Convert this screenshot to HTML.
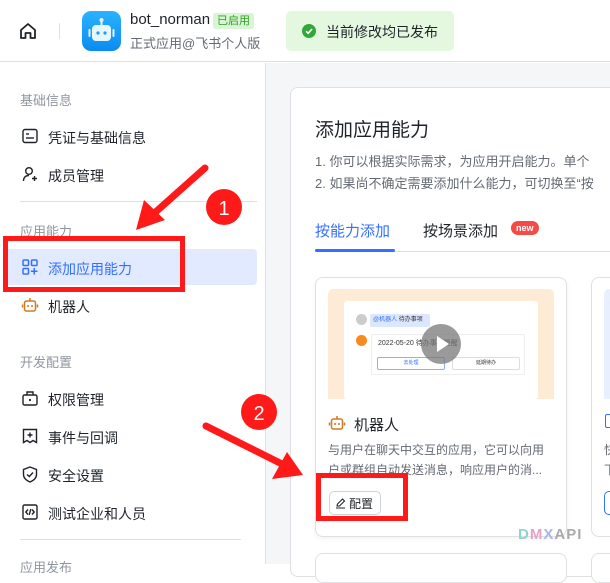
<!DOCTYPE html>
<html><head><meta charset="utf-8"><style>
*{box-sizing:border-box;margin:0;padding:0}
body{width:610px;height:564px;overflow:hidden;background:#fff;font-family:"Liberation Sans","Noto Sans CJK SC",sans-serif;color:#1f2329;position:relative}
.a{position:absolute}
.t{position:absolute;white-space:nowrap}
.side .t{font-size:14px}
.grp{color:#8f959e;font-size:13px!important}
</style></head><body>
<!-- header -->
<div class="a" style="left:0;top:0;width:610px;height:62px;border-bottom:1px solid #dee0e3;background:#fff"></div>
<svg class="a" style="left:18px;top:21px" width="20" height="20" viewBox="0 0 20 20"><path d="M3 9 L10 3 L17 9 V17 H12.5 V12 H7.5 V17 H3 Z" fill="none" stroke="#1f2329" stroke-width="1.8" stroke-linejoin="round"/></svg>
<div class="a" style="left:59px;top:23px;width:1px;height:16px;background:#dee0e3"></div>
<div class="a" style="left:82px;top:11px;width:39px;height:40px;border-radius:9px;background:linear-gradient(180deg,#2bb2ff,#0a8cf0)"></div>
<svg class="a" style="left:82px;top:11px" width="39" height="40" viewBox="0 0 39 40"><line x1="19.5" y1="9" x2="19.5" y2="14" stroke="#dff3ff" stroke-width="2"/><circle cx="19.5" cy="9" r="2" fill="#dff3ff"/><rect x="10" y="14" width="19" height="16" rx="4" fill="#e6f6ff"/><rect x="6.5" y="18" width="2" height="8" rx="1" fill="#e6f6ff"/><rect x="30.5" y="18" width="2" height="8" rx="1" fill="#e6f6ff"/><circle cx="16" cy="22" r="1.6" fill="#1a9bf5"/><circle cx="23" cy="22" r="1.6" fill="#1a9bf5"/></svg>
<div class="t" style="left:130px;top:11px;font-size:15px">bot_norman</div>
<div class="t" style="left:213px;top:13px;font-size:11px;background:#d9f5d6;color:#2ea121;padding:1px 4px;border-radius:3px;line-height:14px">已启用</div>
<div class="t" style="left:130px;top:33px;font-size:13px;color:#646a73">正式应用@飞书个人版</div>
<div class="a" style="left:286px;top:11px;width:168px;height:40px;background:#e4f8e0;border-radius:5px"></div>
<svg class="a" style="left:302px;top:24px" width="14" height="14" viewBox="0 0 14 14"><circle cx="7" cy="7" r="7" fill="#34a73b"/><path d="M4 7.2 L6.2 9.2 L10 5" fill="none" stroke="#fff" stroke-width="1.6"/></svg>
<div class="t" style="left:326px;top:22px;font-size:14px">当前修改均已发布</div>
<!-- sidebar -->
<div class="side">
<div class="a" style="left:265px;top:63px;width:345px;height:501px;background:#f5f6f7;border-left:1px solid #dee0e3"></div>
<div class="t grp" style="left:20px;top:90px">基础信息</div>
<svg class="a" style="left:22px;top:128px" width="16" height="16" viewBox="0 0 16 16"><rect x="1" y="1.5" width="14" height="13" rx="2" fill="none" stroke="#1f2329" stroke-width="1.4"/><line x1="4" y1="6" x2="7" y2="6" stroke="#1f2329" stroke-width="1.4"/><line x1="4" y1="10" x2="12" y2="10" stroke="#1f2329" stroke-width="1.4"/></svg>
<div class="t" style="left:48px;top:128px">凭证与基础信息</div>
<svg class="a" style="left:22px;top:166px" width="16" height="16" viewBox="0 0 16 16"><circle cx="7" cy="5" r="3.3" fill="none" stroke="#1f2329" stroke-width="1.4"/><path d="M1.5 15 C1.5 11 4 9.5 7 9.5" fill="none" stroke="#1f2329" stroke-width="1.4"/><path d="M10 12.5 H15 M12.5 10 V15" stroke="#1f2329" stroke-width="1.4"/></svg>
<div class="t" style="left:48px;top:166px">成员管理</div>
<div class="a" style="left:20px;top:201px;width:237px;height:1px;background:#dee0e3"></div>
<div class="t grp" style="left:20px;top:221px">应用能力</div>
<div class="a" style="left:5px;top:249px;width:252px;height:36px;background:#e1eaff;border-radius:4px"></div>
<svg class="a" style="left:22px;top:259px" width="16" height="16" viewBox="0 0 16 16"><g fill="none" stroke="#3370ff" stroke-width="1.5"><rect x="1" y="1" width="5.5" height="5.5" rx="1"/><rect x="9.5" y="1" width="5.5" height="5.5" rx="1"/><rect x="1" y="9.5" width="5.5" height="5.5" rx="1"/><path d="M12.25 9 V15.5 M9 12.25 H15.5"/></g></svg>
<div class="t" style="left:48px;top:259px;color:#3370ff">添加应用能力</div>
<svg class="a" style="left:21px;top:296px" width="18" height="18" viewBox="0 0 18 18"><g fill="none" stroke="#d07a20" stroke-width="1.5"><rect x="3.5" y="5" width="11" height="10" rx="2"/><path d="M9 2 V5 M1.5 8.5 V11.5 M16.5 8.5 V11.5"/></g><circle cx="7" cy="10" r="1" fill="#d07a20"/><circle cx="11" cy="10" r="1" fill="#d07a20"/></svg>
<div class="t" style="left:48px;top:297px">机器人</div>
<div class="t grp" style="left:20px;top:352px">开发配置</div>
<svg class="a" style="left:22px;top:390px" width="16" height="16" viewBox="0 0 16 16"><g fill="none" stroke="#1f2329" stroke-width="1.4"><rect x="1" y="5" width="14" height="10" rx="1.5"/><path d="M5 5 V2 H11 V5"/></g><circle cx="8" cy="10" r="1.1" fill="#1f2329"/></svg>
<div class="t" style="left:48px;top:390px">权限管理</div>
<svg class="a" style="left:22px;top:428px" width="16" height="16" viewBox="0 0 16 16"><g fill="none" stroke="#1f2329" stroke-width="1.4"><path d="M1.5 1.5 H14.5 V14.5 L11 12.5 L8 14.5 L5 12.5 L1.5 14.5 Z"/><path d="M8 4.5 V9.5 M5.5 7 H10.5"/></g></svg>
<div class="t" style="left:48px;top:428px">事件与回调</div>
<svg class="a" style="left:22px;top:466px" width="16" height="17" viewBox="0 0 16 17"><g fill="none" stroke="#1f2329" stroke-width="1.4"><path d="M8 1 L14.5 3.5 V8.5 C14.5 12 11.5 14.5 8 16 C4.5 14.5 1.5 12 1.5 8.5 V3.5 Z"/><path d="M5 8.5 L7.3 10.5 L11 6.5"/></g></svg>
<div class="t" style="left:48px;top:466px">安全设置</div>
<svg class="a" style="left:22px;top:504px" width="16" height="16" viewBox="0 0 16 16"><g fill="none" stroke="#1f2329" stroke-width="1.4"><rect x="1" y="1" width="14" height="14" rx="1.5"/><path d="M6 5.5 L3.8 8 L6 10.5 M10 5.5 L12.2 8 L10 10.5 M8.8 5 L7.2 11"/></g></svg>
<div class="t" style="left:48px;top:504px">测试企业和人员</div>
<div class="a" style="left:20px;top:539px;width:221px;height:1px;background:#dee0e3"></div>
<div class="t grp" style="left:20px;top:557px">应用发布</div>
</div>
<!-- main card -->
<div class="a" style="left:290px;top:87px;width:330px;height:490px;background:#fff;border:1px solid #dee0e3;border-radius:8px"></div>
<div class="t" style="left:315px;top:115px;font-size:19px">添加应用能力</div>
<div class="t" style="left:315px;top:151px;font-size:13px;color:#646a73">1. 你可以根据实际需求，为应用开启能力。单个</div>
<div class="t" style="left:315px;top:173px;font-size:13px;color:#646a73">2. 如果尚不确定需要添加什么能力，可切换至“按</div>
<div class="t" style="left:315px;top:220px;font-size:15px;color:#3370ff">按能力添加</div>
<div class="t" style="left:423px;top:220px;font-size:15px">按场景添加</div>
<div class="t" style="left:511px;top:221px;font-size:9px;color:#fff;background:#f54a45;border-radius:8px;padding:0 5px;line-height:14px;font-weight:bold">new</div>
<div class="a" style="left:315px;top:251px;width:295px;height:1px;background:#dee0e3"></div>
<div class="a" style="left:315px;top:249px;width:80px;height:3px;background:#3370ff;border-radius:2px"></div>
<!-- card 1 -->
<div class="a" style="left:315px;top:277px;width:252px;height:260px;border:1px solid #dee0e3;border-radius:8px;background:#fff;box-shadow:0 2px 6px rgba(0,0,0,.05)"></div>
<div class="a" style="left:328px;top:289px;width:226px;height:110px;background:#fdebd6;border-radius:5px 5px 0 0"></div>
<div class="a" style="left:344px;top:301px;width:194px;height:98px;background:#fff;border-radius:3px"></div>
<div class="a" style="left:356px;top:314px;width:11px;height:11px;border-radius:50%;background:#ccc"></div>
<div class="a" style="left:370px;top:314px;width:60px;height:13px;background:#dbe6ff;border-radius:2px;font-size:6px;color:#3370ff;line-height:13px;padding-left:3px;white-space:nowrap">@机器人 <span style="color:#333">待办事项</span></div>
<div class="a" style="left:356px;top:335px;width:11px;height:11px;border-radius:50%;background:#f7891f"></div>
<div class="a" style="left:371px;top:334px;width:154px;height:41px;border:1px solid #eee;border-radius:2px"></div>
<div class="t" style="left:378px;top:338px;font-size:7px;color:#333">2022-05-20 待办事项提醒</div>
<div class="a" style="left:377px;top:357px;width:68px;height:13px;border:1px solid #8fb0ff;border-radius:2px;font-size:5px;color:#3370ff;text-align:center;line-height:11px">去处理</div>
<div class="a" style="left:452px;top:357px;width:68px;height:13px;border:1px solid #ddd;border-radius:2px;font-size:5px;color:#333;text-align:center;line-height:11px">延期待办</div>
<div class="a" style="left:421px;top:324px;width:40px;height:40px;border-radius:50%;background:rgba(120,120,120,.75)"></div>
<svg class="a" style="left:421px;top:324px" width="40" height="40"><path d="M16 12 L28 20 L16 28 Z" fill="#fff"/></svg>
<svg class="a" style="left:328px;top:414px" width="18" height="18" viewBox="0 0 18 18"><g fill="none" stroke="#d07a20" stroke-width="1.5"><rect x="3.5" y="5" width="11" height="10" rx="2"/><path d="M9 2 V5 M1.5 8.5 V11.5 M16.5 8.5 V11.5"/></g><circle cx="7" cy="10" r="1" fill="#d07a20"/><circle cx="11" cy="10" r="1" fill="#d07a20"/></svg>
<div class="t" style="left:354px;top:414px;font-size:15px">机器人</div>
<div class="t" style="left:328px;top:441px;font-size:12px;color:#646a73">与用户在聊天中交互的应用，它可以向用</div>
<div class="t" style="left:328px;top:461px;font-size:12px;color:#646a73">户或群组自动发送消息，响应用户的消...</div>
<div class="a" style="left:329px;top:491px;width:52px;height:24px;border:1px solid #d0d3d6;border-radius:5px"></div>
<svg class="a" style="left:335px;top:497px" width="12" height="12" viewBox="0 0 12 12"><path d="M2 9 L2.5 7 L7.5 2 L9.5 4 L4.5 9 Z M1 11 H10" fill="none" stroke="#1f2329" stroke-width="1.1"/></svg>
<div class="t" style="left:349px;top:495px;font-size:12px">配置</div>
<!-- card 2 -->
<div class="a" style="left:591px;top:277px;width:40px;height:260px;border:1px solid #dee0e3;border-radius:8px;background:#fff"></div>
<div class="a" style="left:604px;top:289px;width:20px;height:110px;background:#e8efff;border-radius:5px 0 0 0"></div>
<div class="a" style="left:605px;top:414px;width:8px;height:14px;border:1.5px solid #3370ff;border-right:none;border-radius:2px 0 0 2px"></div>
<div class="t" style="left:604px;top:441px;font-size:12px;color:#646a73">快</div>
<div class="t" style="left:604px;top:461px;font-size:12px;color:#646a73">下</div>
<div class="a" style="left:604px;top:491px;width:20px;height:24px;border:1px solid #3370ff;border-right:none;border-radius:5px 0 0 5px"></div>
<div class="a" style="left:315px;top:553px;width:252px;height:30px;border:1px solid #dee0e3;border-radius:8px;background:#fff"></div>
<div class="a" style="left:591px;top:553px;width:40px;height:30px;border:1px solid #dee0e3;border-radius:8px;background:#fff"></div>
<div class="t" style="left:518px;top:526px;font-size:15px;font-weight:bold;letter-spacing:1px"><span style="color:#8fd3cc">D</span><span style="color:#e6a0c8">M</span><span style="color:#a9b6e6">X</span><span style="color:#aaa">API</span></div>
<!-- annotations -->
<div class="a" style="left:3px;top:236px;width:182px;height:56px;border:5px solid #ff1a1a"></div>
<div class="a" style="left:316px;top:473px;width:92px;height:48px;border:5px solid #ff1a1a"></div>
<svg class="a" style="left:0;top:0" width="610" height="564">
<line x1="205" y1="168" x2="150" y2="217" stroke="#ff1a1a" stroke-width="7" stroke-linecap="round"/>
<path d="M136 230 L144 200 L165 220 Z" fill="#ff1a1a"/>
<line x1="206" y1="426" x2="288" y2="467" stroke="#ff1a1a" stroke-width="7" stroke-linecap="round"/>
<path d="M303 475 L272 479 L287 452 Z" fill="#ff1a1a"/>
<circle cx="224" cy="207" r="18" fill="#ff1a1a"/>
<text x="224" y="215" font-size="20" fill="#fff" text-anchor="middle" font-family="Liberation Sans">1</text>
<circle cx="259" cy="412" r="18" fill="#ff1a1a"/>
<text x="259" y="420" font-size="20" fill="#fff" text-anchor="middle" font-family="Liberation Sans">2</text>
</svg>
</body></html>
